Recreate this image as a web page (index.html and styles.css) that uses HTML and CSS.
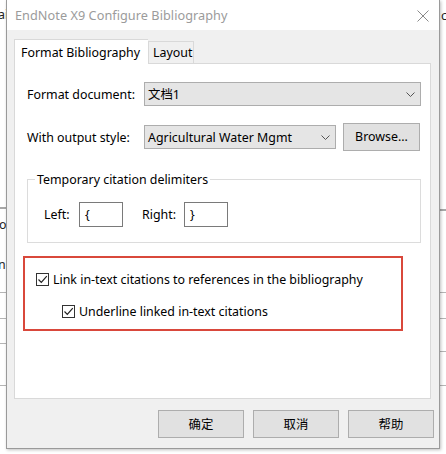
FILE: index.html
```html
<!DOCTYPE html>
<html>
<head>
<meta charset="utf-8">
<link rel="stylesheet" href="styles.css">
</head>
<body>
<div class="desktop">
  <div class="behind">
    <span class="frag frag-ai">ai</span>
    <span class="frag frag-o">o</span>
    <span class="frag frag-ng">ng</span>
    <span class="frag frag-c">c</span>
    <div class="hline l1"></div>
    <div class="hline l2"></div>
    <div class="hline l3"></div>
    <div class="hline l4"></div>
    <div class="hline l5"></div>
    <div class="hline r1"></div>
    <div class="hline r2"></div>
    <div class="hline r3"></div>
    <div class="hline r4"></div>
    <div class="hline r5"></div>
  </div>

  <div class="dialog">
    <div class="titlebar">
      <span class="title">EndNote X9 Configure Bibliography</span>
      <svg class="close" width="12" height="12" viewBox="0 0 12 12"><path d="M0.5 0.5 L11.5 11.5 M11.5 0.5 L0.5 11.5" stroke="#8a8a8a" stroke-width="1" fill="none"/></svg>
    </div>
    <div class="body">
      <div class="tabs">
        <div class="tab active">Format Bibliography</div>
        <div class="tab">Layout</div>
      </div>
      <div class="panel">
        <div class="row row1">
          <span class="label">Format document:</span>
          <div class="combo wide"><span>文档1</span>
            <svg class="chev" width="9" height="5" viewBox="0 0 9 5"><path d="M0.5 0.5 L4.5 4.5 L8.5 0.5" stroke="#555" stroke-width="1" fill="none"/></svg>
          </div>
        </div>
        <div class="row row2">
          <span class="label">With output style:</span>
          <div class="combo narrow"><span>Agricultural Water Mgmt</span>
            <svg class="chev" width="9" height="5" viewBox="0 0 9 5"><path d="M0.5 0.5 L4.5 4.5 L8.5 0.5" stroke="#555" stroke-width="1" fill="none"/></svg>
          </div>
          <div class="btn browse">Browse...</div>
        </div>
        <fieldset class="group">
          <legend>Temporary citation delimiters</legend>
          <div class="delims">
            <span class="dl">Left:</span>
            <div class="input">{</div>
            <span class="dl dr">Right:</span>
            <div class="input">}</div>
          </div>
        </fieldset>
        <div class="redbox">
          <div class="check c1">
            <span class="box"><svg width="11" height="11" viewBox="0 0 11 11"><path d="M1.5 5.5 L4.3 8.3 L9.8 2.2" stroke="#222" stroke-width="1.2" fill="none"/></svg></span>
            <span>Link in-text citations to references in the bibliography</span>
          </div>
          <div class="check c2">
            <span class="box"><svg width="11" height="11" viewBox="0 0 11 11"><path d="M1.5 5.5 L4.3 8.3 L9.8 2.2" stroke="#222" stroke-width="1.2" fill="none"/></svg></span>
            <span>Underline linked in-text citations</span>
          </div>
        </div>
      </div>
      <div class="buttons">
        <div class="btn dbtn">确定</div>
        <div class="btn dbtn">取消</div>
        <div class="btn dbtn">帮助</div>
      </div>
    </div>
  </div>
</div>
</body>
</html>
```
FILE: styles.css
```css
html, body {
  margin: 0;
  padding: 0;
}
body {
  width: 446px;
  height: 454px;
  overflow: hidden;
  font-family: "Noto Sans", "Noto Sans CJK SC", sans-serif;
  font-size: 12.4px;
  color: #000;
}
.desktop {
  position: relative;
  width: 446px;
  height: 454px;
  background: #f3f3f3;
}
.behind {
  position: absolute;
  inset: 0;
  background: #fff;
}
.frag {
  position: absolute;
  font-size: 12.4px;
  color: #222;
}
.frag-ai { left: -2px; top: 6px; }
.frag-o { left: -1px; top: 216px; }
.frag-ng { left: -2px; top: 256px; }
.frag-c { left: 441px; top: 7px; }
.hline {
  position: absolute;
  height: 1px;
  background: #b5b5b5;
  width: 8px;
}
.l1 { left: 0; top: 207px; height: 2px; background: #a8a8a8; }
.l2 { left: 0; top: 292px; }
.l3 { left: 0; top: 318px; }
.l4 { left: 0; top: 343px; }
.l5 { left: 0; top: 385px; }
.r1 { left: 440px; top: 209px; height: 2px; background: #a8a8a8; }
.r2 { left: 440px; top: 292px; }
.r3 { left: 440px; top: 318px; }
.r4 { left: 440px; top: 351px; }
.r5 { left: 440px; top: 385px; }

.dialog {
  position: absolute;
  left: 6px;
  top: 0;
  width: 432px;
  height: 448px;
  background: #f0f0f0;
  border: 1px solid #9a9a9a;
  border-top: none;
  box-shadow: 1px 1px 3px rgba(0,0,0,0.25);
  display: flex;
  flex-direction: column;
}
.titlebar {
  height: 30px;
  background: #fff;
  display: flex;
  align-items: center;
  justify-content: space-between;
  padding: 0 10px 0 8px;
}
.title {
  font-size: 12.7px;
  color: #9b9b9b;
  letter-spacing: 0.05px;
}
.close { margin-top: 1px; }

.body {
  padding: 9px 0 0 7px;
  flex: 1;
  display: flex;
  flex-direction: column;
}
.tabs {
  display: flex;
  align-items: flex-end;
  height: 24px;
  position: relative;
  z-index: 1;
}
.tab {
  box-sizing: border-box;
  height: 22px;
  padding: 0 4px;
  border: 1px solid #d9d9d9;
  border-bottom: none;
  background: #f0f0f0;
  display: flex;
  align-items: center;
  white-space: nowrap;
}
.tab.active {
  height: 25px;
  margin-bottom: -1px;
  background: #fff;
  width: 134px;
  padding-left: 6px;
  border-right: none;
}
.tab:not(.active) {
  width: 46px;
}
.panel {
  box-sizing: border-box;
  width: 417px;
  height: 336px;
  background: #fff;
  border: 1px solid #d9d9d9;
  padding: 18px 0 0 12px;
  display: flex;
  flex-direction: column;
}
.row {
  display: flex;
  align-items: center;
}
.label {
  width: 117px;
}
.combo {
  box-sizing: border-box;
  height: 24px;
  background: #e5e5e5;
  border: 1px solid #adadad;
  display: flex;
  align-items: center;
  justify-content: space-between;
  padding: 0 5px 0 3px;
}
.combo.wide { width: 277px; }
.combo.narrow { width: 192px; }
.row2 { margin-top: 17px; height: 28px; }
.btn {
  box-sizing: border-box;
  background: #e1e1e1;
  border: 1px solid #adadad;
  display: flex;
  align-items: center;
  justify-content: center;
}
.browse {
  width: 77px;
  height: 28px;
  margin-left: 7px;
  padding-bottom: 2px;
}
.group {
  box-sizing: border-box;
  margin: 20px 0 0 0;
  width: 394px;
  height: 72px;
  border: 1px solid #dcdcdc;
  padding: 0 0 0 16px;
}
.group legend {
  padding: 0 2px;
  margin-left: -9px;
}
.delims {
  display: flex;
  align-items: center;
  margin-top: 14px;
}
.dl { width: 35px; }
.dr { margin-left: 19px; width: 42px; }
.input {
  box-sizing: border-box;
  width: 44px;
  height: 25px;
  border: 1px solid #7a7a7a;
  background: #fff;
  padding-left: 5px;
  display: flex;
  align-items: center;
}
.redbox {
  box-sizing: border-box;
  margin: 13px 0 0 -4px;
  width: 380px;
  height: 75px;
  border: 2px solid #d9483b;
  padding: 14px 0 0 11px;
}
.check {
  display: flex;
  align-items: center;
  height: 14px;
}
.check .box {
  box-sizing: border-box;
  width: 13px;
  height: 13px;
  border: 1px solid #333;
  background: #fff;
  margin-right: 4px;
  display: flex;
  align-items: center;
  justify-content: center;
}
.c2 { margin: 18px 0 0 26px; }
.buttons {
  display: flex;
  justify-content: flex-end;
  gap: 9px;
  padding: 11px 5px 0 0;
}
.dbtn {
  width: 86px;
  height: 28px;
  font-family: "Noto Sans CJK SC", sans-serif;
  font-size: 12.4px;
}
```
